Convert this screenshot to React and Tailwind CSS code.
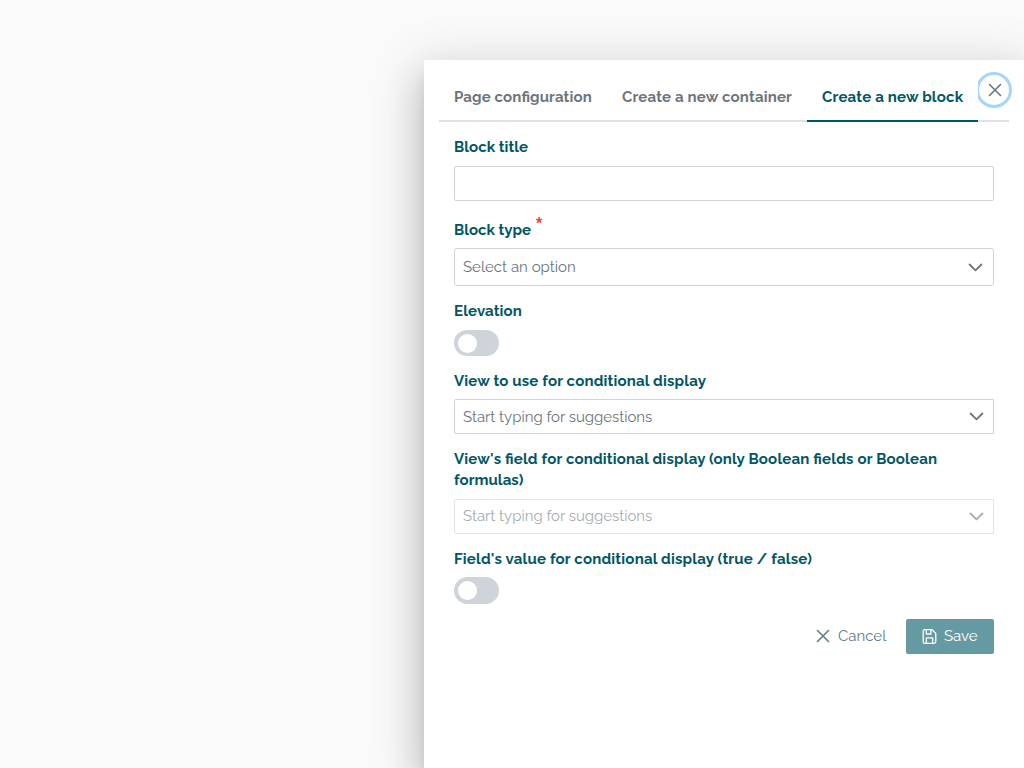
import React from "react";

function Times({ className }) {
  return (
    <svg className={className} viewBox="0 0 14 14" fill="none" stroke="currentColor" strokeWidth="1.6" strokeLinecap="round">
      <path d="M1.5 1.5 12.5 12.5M12.5 1.5 1.5 12.5" />
    </svg>
  );
}

function Chevron() {
  return (
    <svg className="h-[15px] w-[15px] shrink-0" viewBox="0 0 15 15" fill="none" stroke="currentColor" strokeWidth="1.8" strokeLinecap="round" strokeLinejoin="round">
      <path d="M1.6 4.5 7.5 10.3 13.4 4.5" />
    </svg>
  );
}

function SaveIcon() {
  return (
    <svg className="h-[15px] w-[15px] shrink-0" viewBox="0 0 15 15" fill="none" stroke="currentColor" strokeWidth="1.3" strokeLinejoin="round">
      <path d="M2.6.7H10.1L13.8 4.4V12.6Q13.8 14.3 12.2 14.3H2.8Q1.2 14.3 1.2 12.6V2.3Q1.2.7 2.6.7Z" />
      <path d="M4.3 1V5H8.9V1M4.3 14V8.9H10.7V14" />
    </svg>
  );
}

function Label({ className = "", children }) {
  return <div className={`font-bold leading-[21px] text-[#005666] ${className}`}>{children}</div>;
}

function Toggle({ className }) {
  return (
    <div className={`flex w-[45px] items-center rounded-full bg-[#ced4da] pl-1 ${className}`}>
      <span className="h-[19px] w-[19px] rounded-full bg-white" />
    </div>
  );
}

function Picker({ className, text, textClass = "" }) {
  return (
    <div className={`flex items-center justify-between border border-[#ced4da] pl-2 text-[#6c757d] ${className}`}>
      <span className={textClass}>{text}</span>
      <Chevron />
    </div>
  );
}

export default function App() {
  return (
    <div className="flex h-screen w-screen items-end justify-end overflow-hidden bg-[#fafafa] font-['Raleway','Lato',sans-serif] text-[15px] leading-[21px] [font-feature-settings:'liga'_1]">
      <main className="relative h-[708px] w-[600px] bg-white px-[15px] pt-[15px] shadow-[0_11px_15px_-7px_rgba(0,0,0,0.2),0_24px_38px_3px_rgba(0,0,0,0.14),0_9px_46px_8px_rgba(0,0,0,0.12)]">
        <button className="absolute top-[15px] left-[555px] flex h-[30px] w-[30px] items-center justify-center rounded-full text-[#6c757d] shadow-[0_0_0_3px_#a6d5fa]">
          <Times className="ml-px h-[14px] w-[14px]" />
        </button>
        <nav className="flex h-[47px] border-b-2 border-[#dee2e6] font-bold whitespace-nowrap text-[#6c757d]">
          <div className="w-[168px] px-[15px] pt-[12px] tracking-[0.12px]">Page configuration</div>
          <div className="w-[200px] px-[15px] pt-[12px] tracking-[0.18px]">Create a new container</div>
          <div className="z-10 h-[47px] w-[171px] border-b-2 border-[#005666] bg-white px-[15px] pt-[12px] tracking-[0.2px] text-[#005666]">Create a new block</div>
        </nav>
        <form className="flex flex-col px-[15px] pt-[15px]">
          <Label className="tracking-[0.05px]">Block title</Label>
          <input className="mt-[8px] h-[35px] w-full rounded-[2px] border border-[#ced4da]" />
          <div className="mt-[19px] flex">
            <Label>Block type</Label>
            <span className="ml-[5px] -mt-[7px] h-[21px] font-['Liberation_Sans',sans-serif] text-[16px] leading-[21px] font-bold text-[#f44336]">*</span>
          </div>
          <Picker className="mt-[7px] h-[38px] rounded-[3px] pr-[10px]" text="Select an option" />
          <Label className="mt-[15px] tracking-[0.12px]">Elevation</Label>
          <Toggle className="mt-[8px] h-[26px]" />
          <Label className="mt-[15px] tracking-[0.18px]">View to use for conditional display</Label>
          <Picker className="mt-[7px] h-[35px] rounded-l-[2px] pr-[9px]" text="Start typing for suggestions" textClass="pt-px tracking-[-0.03px]" />
          <Label className="mt-[15px] tracking-[0.19px]">
            View&apos;s field for conditional display (only Boolean fields or Boolean
            <br />
            <span className="tracking-[0.05px]">formulas)</span>
          </Label>
          <Picker className="mt-[8px] h-[35px] rounded-l-[2px] pr-[9px] opacity-60" text="Start typing for suggestions" textClass="tracking-[-0.03px]" />
          <Label className="mt-[15px] tracking-[0.2px]">Field&apos;s value for conditional display (true / false)</Label>
          <Toggle className="mt-[7px] h-[27px]" />
          <div className="mt-[15px] flex h-[35px] justify-end">
            <button type="button" className="mr-[20px] flex items-center text-[#607d8b]">
              <Times className="mr-[8px] mb-px h-[14px] w-[14px]" />
              <span className="w-[48px] text-left whitespace-nowrap">Cancel</span>
            </button>
            <button type="button" className="flex w-[88px] items-center rounded-[2px] bg-[#669aa3] pl-[16px] text-white">
              <SaveIcon />
              <span className="ml-[7px]">Save</span>
            </button>
          </div>
        </form>
      </main>
    </div>
  );
}
